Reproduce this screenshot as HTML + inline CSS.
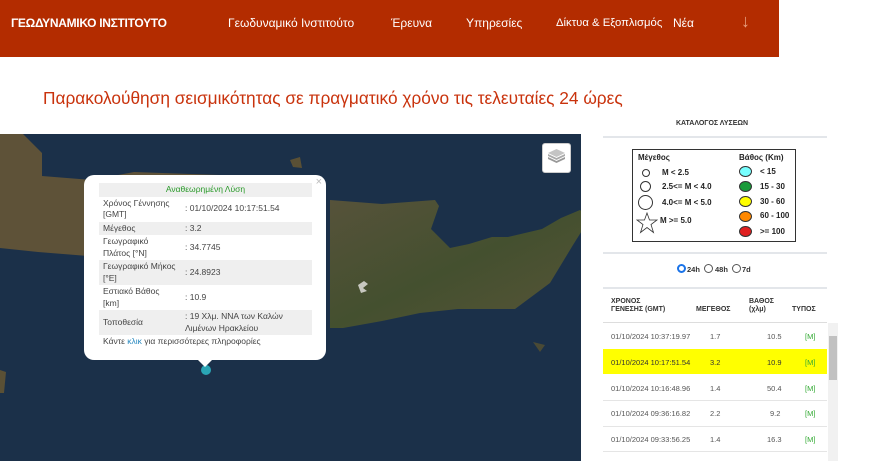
<!DOCTYPE html>
<html><head><meta charset="utf-8"><style>
*{margin:0;padding:0;box-sizing:border-box}
body{width:880px;height:461px;overflow:hidden;background:#fff;font-family:"Liberation Sans",sans-serif;position:relative}
.hdr{position:absolute;left:0;top:0;width:779px;height:57px;background:#b32c00}
.hdr span{position:absolute;top:16px;color:#fff;font-size:12px;white-space:nowrap}
.title{position:absolute;left:43px;top:88px;color:#c9330d;font-size:17.3px;white-space:nowrap}
.map{position:absolute;left:0;top:134px;width:581px;height:327px;background:#1b3049;overflow:hidden}
.pop{position:absolute;left:84px;top:175px;width:242px;height:185px;background:#fff;border-radius:10px;font-size:8.5px;color:#444}
.pop table{position:absolute;left:15px;top:8px;width:213px;border-collapse:collapse}
.pop td{padding:1px 4px;line-height:11.5px;vertical-align:middle}
.pop tr.g td{background:#efefef}
.right{position:absolute;left:600px;top:0;width:240px;height:461px}
.t{position:absolute;font-size:7.5px;color:#333;white-space:nowrap}
</style></head><body>
<div class="hdr">
<span style="left:11px;font-weight:bold;letter-spacing:-0.3px">ΓΕΩΔΥΝΑΜΙΚΟ ΙΝΣΤΙΤΟΥΤΟ</span>
<span style="left:228px">Γεωδυναμικό Ινστιτούτο</span>
<span style="left:391px">Έρευνα</span>
<span style="left:466px">Υπηρεσίες</span>
<span style="left:556px;font-size:11.3px;top:17px">Δίκτυα &amp; Εξοπλισμός</span>
<span style="left:673px">Νέα</span>
<span style="left:741px;top:11px;font-size:18px;color:#e9a080">↓</span>
</div>
<div class="title">Παρακολούθηση σεισμικότητας σε πραγματικό χρόνο τις τελευταίες 24 ώρες</div>
<div class="map">
<svg width="581" height="327" viewBox="0 134 581 327">
<defs><linearGradient id="l" x1="0" y1="0" x2="1" y2="1"><stop offset="0" stop-color="#56523a"/><stop offset=".5" stop-color="#44502f"/><stop offset="1" stop-color="#585438"/></linearGradient></defs>
<polygon fill="url(#l)" points="330,200 382,204 435,200 439,206 431,229 450,248 469,244 492,237 508,237 542,229 561,218 580,210 590,218 573,245 550,283 515,309 458,309 420,313 382,321 343,328 330,328"/>
<polygon fill="#5e5238" points="0,134 23,134 42,153 42,176 92,180 134,172 248,176 300,190 300,260 88,256 38,252 0,248"/>
<polygon fill="#5a5035" points="0,370 6,372 4,393 0,393"/>
<polygon fill="#5a5035" points="290,160 300,157 302,168 293,167"/>
<polygon fill="#4a4a35" points="533,342 545,345 540,352"/>
<path d="M358,285 l6,-4 l4,3 l-5,4 l4,3 l-6,2z" fill="#c8c8c0"/>
<circle cx="206" cy="370" r="5" fill="#2aa5b5"/>
</svg>
<div style="position:absolute;left:542px;top:9px;width:29px;height:30px;background:#fff;border-radius:3px;border:1px solid #ccc">
<svg width="27" height="28" viewBox="0 0 27 28"><polygon points="13.5,17 22,13 22,15 13.5,19 5,15 5,13" fill="#999"/><polygon points="13.5,14 22,10 22,12 13.5,16 5,12 5,10" fill="#aaa"/><polygon points="13.5,5 22,9 13.5,13 5,9" fill="#c4c4c4"/></svg></div>
</div>
<div class="pop">
<span style="position:absolute;right:4px;top:1px;color:#bbb;font-size:11px">×</span>
<table>
<tr class="g"><td colspan="2" style="text-align:center;color:#2a9a2a">Αναθεωρημένη Λύση</td></tr>
<tr><td style="width:82px">Χρόνος Γέννησης [GMT]</td><td>: 01/10/2024 10:17:51.54</td></tr>
<tr class="g"><td>Μέγεθος</td><td>: 3.2</td></tr>
<tr><td>Γεωγραφικό Πλάτος [°N]</td><td>: 34.7745</td></tr>
<tr class="g"><td>Γεωγραφικό Μήκος [°E]</td><td>: 24.8923</td></tr>
<tr><td>Εστιακό Βάθος [km]</td><td>: 10.9</td></tr>
<tr class="g"><td>Τοποθεσία</td><td>: 19 Χλμ. ΝΝΑ των Καλών Λιμένων Ηρακλείου</td></tr>
<tr><td colspan="2">Κάντε <span style="color:#2a8ac0">κλικ</span> για περισσότερες πληροφορίες</td></tr>
</table>
<div style="position:absolute;left:114px;bottom:-7px;width:0;height:0;border-left:7px solid transparent;border-right:7px solid transparent;border-top:7px solid #fff"></div>
</div>
<div class="right">
<div class="t" style="left:76px;top:120px;font-size:7px;font-weight:bold">ΚΑΤΑΛΟΓΟΣ ΛΥΣΕΩΝ</div>
<div style="position:absolute;left:3px;top:136px;width:224px;height:2px;background:#e3e6ea"></div>
<div style="position:absolute;left:32px;top:149px;width:164px;height:93px;border:1px solid #333;font-size:8px;font-weight:bold;color:#222;white-space:nowrap">
<div style="position:absolute;left:5px;top:3px">Μέγεθος</div>
<div style="position:absolute;left:106px;top:3px">Βάθος (Km)</div>
<div style="position:absolute;left:9px;top:19px;width:8px;height:8px;border:1px solid #333;border-radius:50%"></div><div style="position:absolute;left:29px;top:18px">M &lt; 2.5</div>
<div style="position:absolute;left:7px;top:31px;width:11px;height:11px;border:1px solid #333;border-radius:50%"></div><div style="position:absolute;left:29px;top:32px">2.5&lt;= M &lt; 4.0</div>
<div style="position:absolute;left:5px;top:45px;width:15px;height:15px;border:1px solid #333;border-radius:50%"></div><div style="position:absolute;left:29px;top:48px">4.0&lt;= M &lt; 5.0</div>
<svg style="position:absolute;left:3px;top:62px" width="22" height="22" viewBox="0 0 22 22"><polygon points="11,1 13.5,8 21,8 15,12.5 17.5,20.5 11,15.5 4.5,20.5 7,12.5 1,8 8.5,8" fill="none" stroke="#333" stroke-width="0.8"/></svg><div style="position:absolute;left:27px;top:66px">M &gt;= 5.0</div>
<div style="position:absolute;left:106px;top:16px;width:13px;height:11px;border:1px solid #333;border-radius:50%;background:#7ff"></div><div style="position:absolute;left:127px;top:17px">&lt; 15</div>
<div style="position:absolute;left:106px;top:31px;width:13px;height:11px;border:1px solid #333;border-radius:50%;background:#1a9a3a"></div><div style="position:absolute;left:127px;top:32px">15 - 30</div>
<div style="position:absolute;left:106px;top:46px;width:13px;height:11px;border:1px solid #333;border-radius:50%;background:#ff0"></div><div style="position:absolute;left:127px;top:47px">30 - 60</div>
<div style="position:absolute;left:106px;top:61px;width:13px;height:11px;border:1px solid #333;border-radius:50%;background:#f80"></div><div style="position:absolute;left:127px;top:61px">60 - 100</div>
<div style="position:absolute;left:106px;top:76px;width:13px;height:11px;border:1px solid #333;border-radius:50%;background:#e02020"></div><div style="position:absolute;left:127px;top:77px">&gt;= 100</div>
</div>
<div style="position:absolute;left:3px;top:252px;width:224px;height:2px;background:#e3e6ea"></div>
<div style="position:absolute;left:77px;top:264px;width:9px;height:9px;border-radius:50%;border:2.5px solid #1a73e8"></div>
<div style="position:absolute;left:104px;top:264px;width:9px;height:9px;border-radius:50%;border:1px solid #555"></div>
<div style="position:absolute;left:132px;top:264px;width:9px;height:9px;border-radius:50%;border:1px solid #555"></div>
<div class="t" style="left:87px;top:265px;font-weight:bold">24h</div>
<div class="t" style="left:115px;top:265px;font-weight:bold">48h</div>
<div class="t" style="left:142px;top:265px;font-weight:bold">7d</div>
<div style="position:absolute;left:3px;top:287px;width:224px;height:2px;background:#e3e6ea"></div>
<div class="t" style="left:11px;top:298px;font-weight:bold;line-height:8px;font-size:7px">ΧΡΟΝΟΣ<br>ΓΕΝΕΣΗΣ (GMT)</div>
<div class="t" style="left:96px;top:306px;font-weight:bold;font-size:7px">ΜΕΓΕΘΟΣ</div>
<div class="t" style="left:149px;top:298px;font-weight:bold;line-height:8px;font-size:7px">ΒΑΘΟΣ<br>(χλμ)</div>
<div class="t" style="left:192px;top:306px;font-weight:bold;font-size:7px">ΤΥΠΟΣ</div>
<div style="position:absolute;left:3px;top:322px;width:224px;height:1px;background:#ddd"></div>
<div style="position:absolute;left:3px;top:349px;width:224px;height:25px;background:#ffff00"></div>
<div style="position:absolute;left:3px;top:400px;width:224px;height:1px;background:#e5e5e5"></div>
<div style="position:absolute;left:3px;top:426px;width:224px;height:1px;background:#e5e5e5"></div>
<div style="position:absolute;left:3px;top:451px;width:224px;height:1px;background:#e5e5e5"></div>
<div style="position:absolute;left:228px;top:323px;width:10px;height:138px;background:#f1f1f1"></div>
<div style="position:absolute;left:229px;top:336px;width:8px;height:44px;background:#c1c1c1"></div>
<div class="t" style="left:11px;top:332px;color:#555">01/10/2024 10:37:19.97</div><div class="t" style="left:110px;top:332px;color:#555">1.7</div><div class="t" style="left:167px;top:332px;color:#555">10.5</div><div class="t" style="left:205px;top:332px;color:#3a3">[M]</div>
<div class="t" style="left:11px;top:358px">01/10/2024 10:17:51.54</div><div class="t" style="left:110px;top:358px">3.2</div><div class="t" style="left:167px;top:358px">10.9</div><div class="t" style="left:205px;top:358px;color:#3a3">[M]</div>
<div class="t" style="left:11px;top:384px;color:#555">01/10/2024 10:16:48.96</div><div class="t" style="left:110px;top:384px;color:#555">1.4</div><div class="t" style="left:167px;top:384px;color:#555">50.4</div><div class="t" style="left:205px;top:384px;color:#3a3">[M]</div>
<div class="t" style="left:11px;top:409px;color:#555">01/10/2024 09:36:16.82</div><div class="t" style="left:110px;top:409px;color:#555">2.2</div><div class="t" style="left:170px;top:409px;color:#555">9.2</div><div class="t" style="left:205px;top:409px;color:#3a3">[M]</div>
<div class="t" style="left:11px;top:435px;color:#555">01/10/2024 09:33:56.25</div><div class="t" style="left:110px;top:435px;color:#555">1.4</div><div class="t" style="left:167px;top:435px;color:#555">16.3</div><div class="t" style="left:205px;top:435px;color:#3a3">[M]</div>
</div>
</body></html>
